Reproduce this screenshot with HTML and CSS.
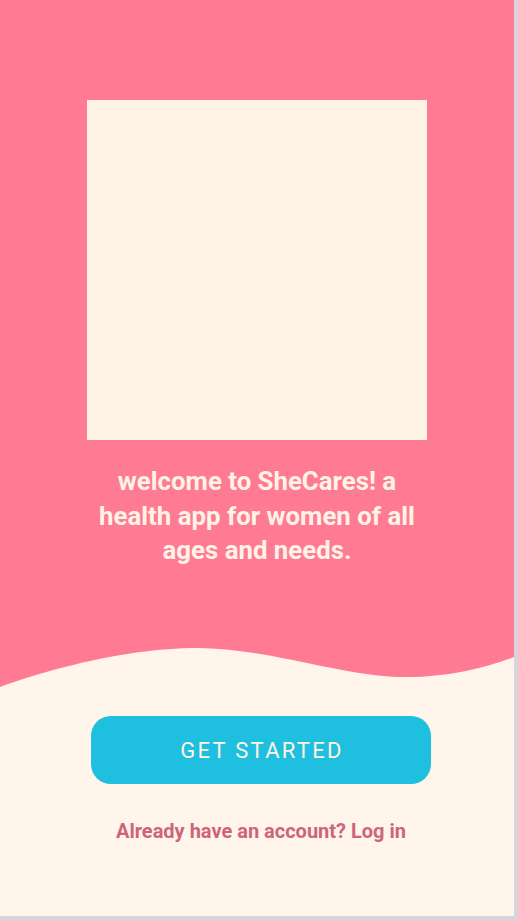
FILE: index.html
```html
<!DOCTYPE html>
<html lang="en">
<head>
<meta charset="utf-8">
<title>SheCares</title>
<link rel="stylesheet" href="styles.css">
</head>
<body>
<div class="frame">
  <main class="screen">
    <section class="hero">
      <div class="illustration"></div>
      <p class="welcome">welcome to SheCares! a health app for women of all ages and needs.</p>
    </section>
    <svg class="wave" viewBox="0 0 514 44" preserveAspectRatio="none" aria-hidden="true">
      <path d="M0 0 H514 V11 C490 20 450 32 400 31 C340 30 260 0 190 2 C110 4 30 30 0 41 Z" fill="#FF7B93"/>
    </svg>
    <section class="actions">
      <button class="cta">GET STARTED</button>
      <a class="login" href="#">Already have an account? Log in</a>
    </section>
  </main>
</div>
</body>
</html>
```
FILE: styles.css
```css
* { box-sizing: border-box; }
html, body {
  margin: 0;
  padding: 0;
  background: #D5D5DB;
}
.frame {
  width: 518px;
  height: 920px;
  padding: 0 4px 4px 0;
}
.screen {
  width: 514px;
  height: 916px;
  background: #FFF5EA;
  display: flex;
  flex-direction: column;
  font-family: Roboto, "Liberation Sans", sans-serif;
  overflow: hidden;
}
.hero {
  background: #FF7B93;
  height: 646px;
  padding-top: 100px;
  display: flex;
  flex-direction: column;
  align-items: center;
}
.illustration {
  width: 340px;
  height: 340px;
  background: #FFF3E6;
}
.welcome {
  margin: 24px 0 0;
  width: 334px;
  text-align: center;
  color: #FFF3E6;
  font-weight: 700;
  font-size: 25.8px;
  line-height: 34.5px;
}
.wave {
  display: block;
  width: 514px;
  height: 44px;
}
.actions {
  display: flex;
  flex-direction: column;
  align-items: center;
  padding-top: 26px;
  padding-left: 8px;
}
.cta {
  width: 340px;
  height: 68px;
  border: none;
  border-radius: 20px;
  background: #1EBFDF;
  color: #FFF3E6;
  font-family: Roboto, "Liberation Sans", sans-serif;
  font-size: 22px;
  font-weight: 400;
  letter-spacing: 2.3px;
  padding: 0 0 0 2px;
}
.login {
  margin-top: 36px;
  color: #CF6479;
  font-weight: 700;
  font-size: 20px;
  line-height: 23px;
  text-decoration: none;
}
```
